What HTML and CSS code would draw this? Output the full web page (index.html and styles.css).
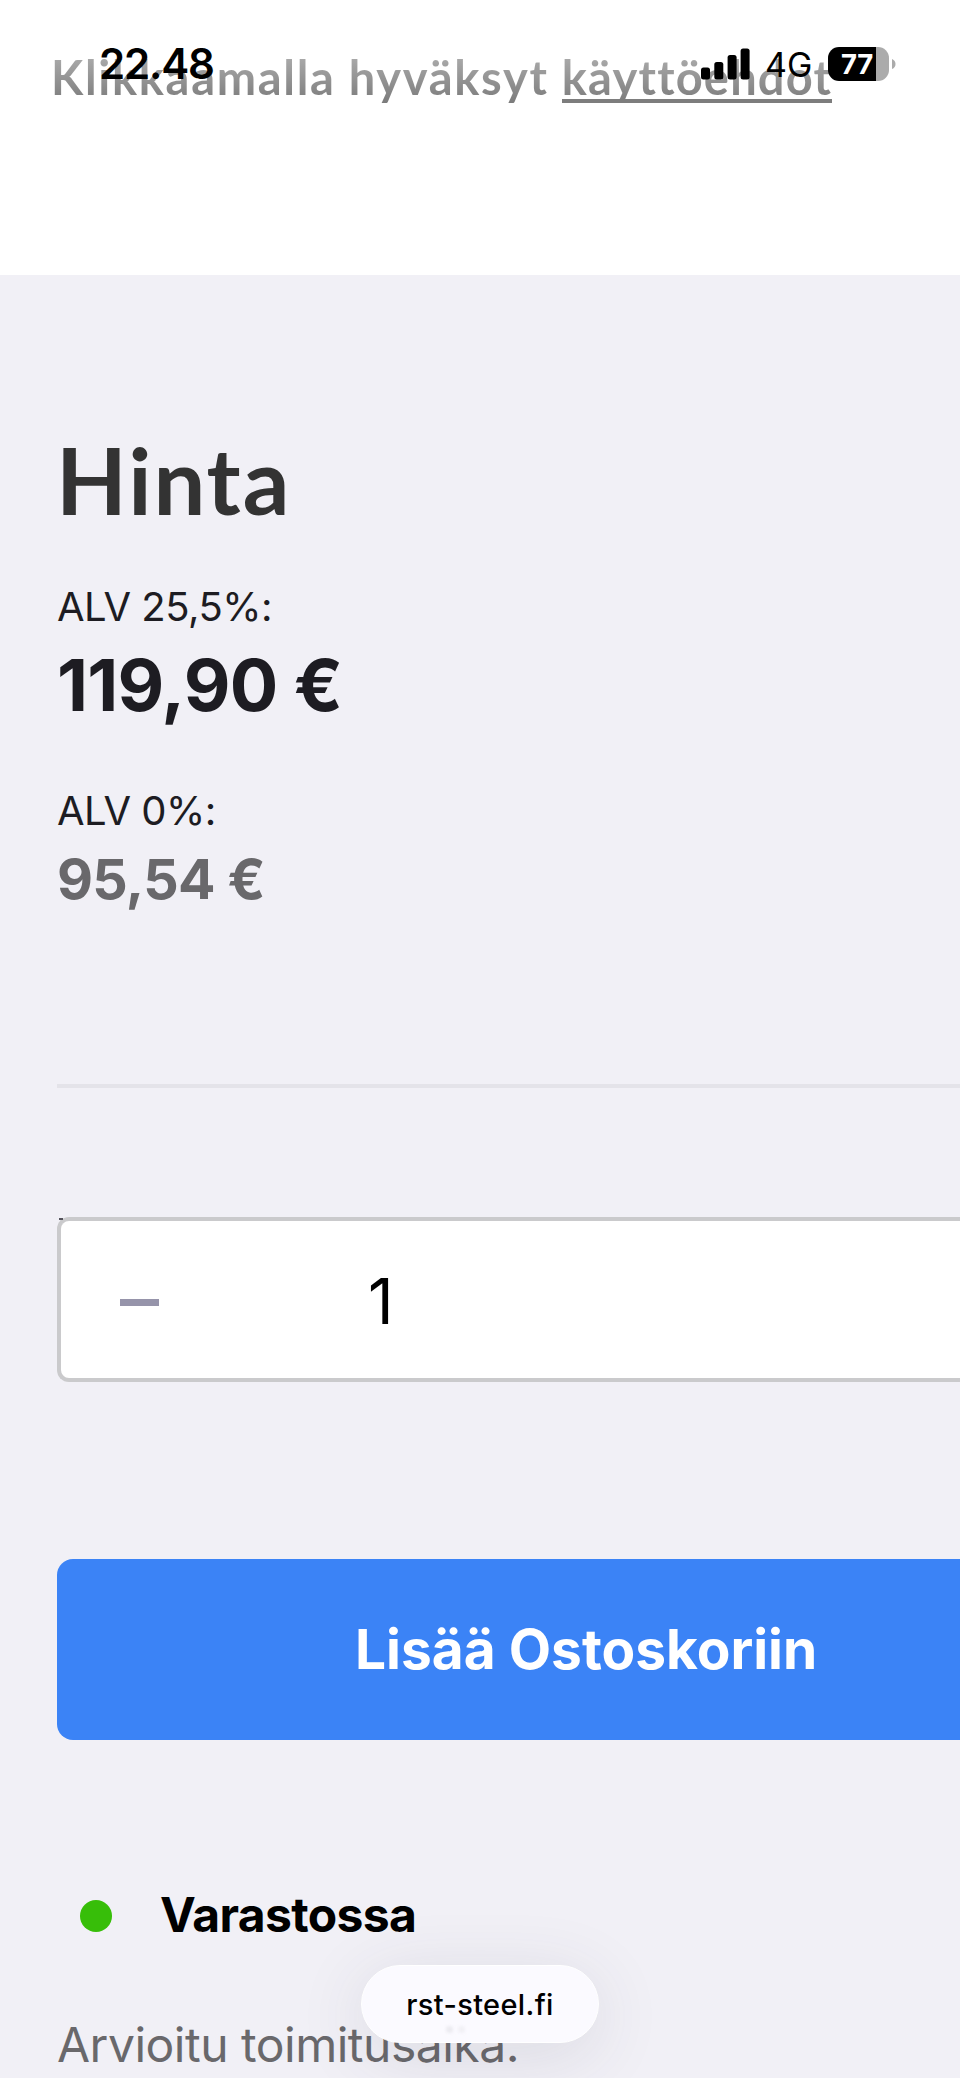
FILE: index.html
```html
<!DOCTYPE html>
<html lang="fi">
<head>
<meta charset="utf-8">
<title>rst-steel.fi</title>
<link rel="stylesheet" href="styles.css">
</head>
<body>
<div class="statusbar">
  <span class="time">22.48</span>
  <div class="status-right">
    <svg class="signal" width="49" height="32" viewBox="0 0 49 32"><rect x="0" y="19.5" width="9" height="12" rx="2.5"/><rect x="13.3" y="14" width="9" height="17.5" rx="2.5"/><rect x="26.6" y="7" width="9" height="24.5" rx="2.5"/><rect x="39.6" y="0.5" width="9" height="31" rx="2.5"/></svg>
    <span class="network">4G</span>
    <div class="battery"><span class="level">77</span></div>
    <svg class="nub" width="4" height="10" viewBox="0 0 4 10"><path d="M0 0Q3.5 1.5 3.5 5T0 10Z"/></svg>
  </div>
</div>
<header class="terms"><p class="terms-text">Klikkaamalla hyväksyt <a class="terms-link">käyttöehdot</a></p></header>
<main class="product">
  <h1 class="heading">Hinta</h1>
  <p class="vat">ALV 25,5%:</p>
  <p class="price">119,90 €</p>
  <p class="vat vat-zero">ALV 0%:</p>
  <p class="price-net">95,54 €</p>
  <hr class="divider">
  <div class="quantity"><span class="corner"></span><span class="minus"></span><span class="count">1</span></div>
  <div class="buy">Lisää Ostoskoriin</div>
  <div class="stock"><span class="dot"></span><span class="stock-text">Varastossa</span></div>
  <p class="delivery">Arvioitu toimitusaika:</p>
</main>
<div class="address"><span class="address-text">rst-steel.fi</span><span class="ghost"></span></div>
</body>
</html>
```
FILE: styles.css
```css
* { box-sizing: border-box; }
body {
  margin: 0;
  position: relative;
  width: 960px;
  height: 2078px;
  overflow: hidden;
  background: #f1f0f6;
  font-family: Inter, "Liberation Sans", sans-serif;
  white-space: nowrap;
}
p, h1 { margin: 0; }
.statusbar {
  position: absolute;
  top: 44px;
  left: 99px;
  width: 797px;
  height: 40px;
  display: flex;
  justify-content: space-between;
  z-index: 2;
}
.time { font-size: 42px; font-weight: 600; line-height: 40px; letter-spacing: -1.2px; }
.status-right { display: flex; align-items: center; }
.signal { margin-right: 15px; margin-top: -1px; }
.network { width: 47px; font-size: 34px; font-weight: 400; line-height: 42px; margin-right: 16px; margin-top: 2px; }
.battery {
  width: 61px;
  height: 34px;
  border-radius: 11px;
  background: linear-gradient(90deg, #000 47.5px, #ababab 47.5px);
  margin-right: 3px;
}
.level { display: block; padding-left: 13px; color: #fff; font-size: 27.5px; font-weight: 700; line-height: 35px; letter-spacing: -0.4px; }
.nub { fill: #ababab; }
.terms { height: 275px; padding: 47px 0 0 51px; background: #fff; }
.terms-text {
  font: 700 47px/60px Lato, sans-serif;
  letter-spacing: 1.7px;
  color: transparent;
  background: linear-gradient(#a8a8a8 12px, #777 60px);
  background-clip: text;
  -webkit-background-clip: text;
}
.terms-link { display: inline-block; height: 56px; border-bottom: 4px solid #7d7d7d; letter-spacing: 1.2px; }
.product { padding: 150px 0 0 57px; }
.heading { margin-left: -1px; font: 700 92px/110px Lato, sans-serif; color: #333; letter-spacing: 1.9px; }
.vat { margin-top: 47px; font-size: 40px; line-height: 50px; color: #1d1c22; letter-spacing: -0.5px; }
.price { margin-top: 8px; font-size: 72px; font-weight: 700; line-height: 90px; color: #1d1c22; letter-spacing: -0.8px; }
.vat-zero { margin-top: 56px; }
.price-net { margin-top: 8px; font-size: 55.5px; font-weight: 700; line-height: 70px; color: #69686b; letter-spacing: -0.7px; }
.divider { height: 4px; margin: 170px 0 0; border: 0; background: #e4e3e9; }
.quantity {
  position: relative;
  display: flex;
  align-items: center;
  height: 165px;
  margin-top: 129px;
  padding-left: 59px;
  border: 4px solid #cacacc;
  border-right: 0;
  border-radius: 12px 0 0 12px;
  background: #fff;
}
.corner { position: absolute; left: -2px; top: -3px; width: 4px; height: 2px; background: #55545c; }
.minus { width: 39px; height: 7px; margin-top: 6px; background: #9694aa; }
.count { margin: 2px 0 0 209px; font-size: 63px; line-height: 80px; }
.buy {
  height: 181px;
  margin-top: 177px;
  padding-left: 298px;
  border-radius: 16px 0 0 16px;
  background: #3b83f6;
  color: #fff;
  font-size: 55px;
  font-weight: 700;
  line-height: 180px;
}
.stock { display: flex; align-items: center; height: 60px; margin-top: 145px; padding-left: 23px; }
.dot { width: 32px; height: 32px; margin-top: 2px; border-radius: 50%; background: #37be09; }
.stock-text { margin-left: 48px; font-size: 48px; font-weight: 700; line-height: 60px; letter-spacing: -0.65px; }
.delivery { margin-top: 67px; font-size: 48px; line-height: 66px; color: #69686b; letter-spacing: -0.5px; }
.address {
  position: absolute;
  left: 361px;
  top: 1965px;
  width: 238px;
  height: 78px;
  border-radius: 39px;
  background: #fbfaff;
  border: 1px solid #fff;
  box-shadow: 0 12px 70px rgba(60, 60, 80, 0.12);
  text-align: center;
}
.address-text { font-size: 29px; font-weight: 500; line-height: 78px; letter-spacing: 0.35px; }
.ghost {
  position: absolute;
  left: 84px;
  top: 60px;
  width: 7px;
  height: 7px;
  border-radius: 50%;
  background: #ebeaf0;
  box-shadow: 12px 0 #f1f0f5;
  filter: blur(1.5px);
}
```
